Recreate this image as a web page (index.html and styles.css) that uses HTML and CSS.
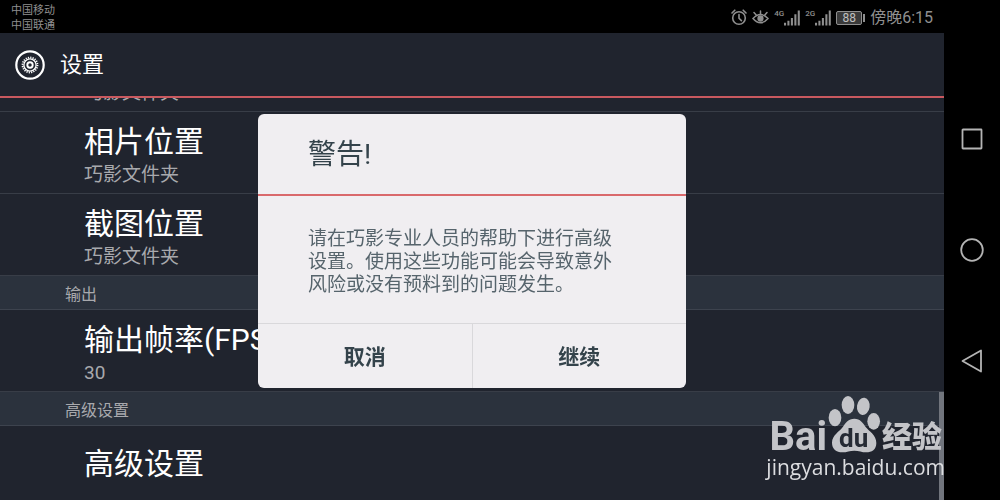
FILE: index.html
```html
<!DOCTYPE html>
<html lang="zh-CN">
<head>
  <meta charset="UTF-8">
  <meta name="viewport" content="width=device-width, initial-scale=1.0">
  <title>设置</title>
  <link rel="stylesheet" href="styles.css">
</head>
<body>
  <div class="screen">
    <div class="status-bar">
      <div class="carriers">
        <p>中国移动</p>
        <p>中国联通</p>
      </div>
      <div class="status-icons">
        <svg class="alarm" width="16" height="17" viewBox="0 0 16 17" fill="none" stroke="currentColor" stroke-width="1.6" stroke-linecap="round">
          <circle cx="8" cy="9" r="6.3"/>
          <path d="M8 5.5V9.2L10.4 11.6M1 4L3.8 1.2M15 4L12.2 1.2"/>
        </svg>
        <svg class="eye" width="17" height="17" viewBox="0 0 17 17" fill="none" stroke="currentColor" stroke-width="1.5" stroke-linecap="round">
          <path d="M1 9.5Q8.5 1.5 16 9.5Q8.5 18 1 9.5Z"/>
          <circle cx="8.5" cy="9.5" r="2.4" fill="currentColor"/>
          <path d="M8.5 5V2M4.2 6L2 3.5M12.8 6L15 3.5"/>
        </svg>
        <div class="signal">
          <span>4G</span>
          <svg width="16" height="16" viewBox="0 0 17 16" fill="currentColor">
            <path d="M0 13h2.2v3h-2.2zM3.6 11h2.2v5h-2.2zM7.3 8h2.2v8h-2.2zM11 4h2.2v12h-2.2zM14.6 0h2.2v16h-2.2z"/>
          </svg>
        </div>
        <div class="signal">
          <span>2G</span>
          <svg width="16" height="16" viewBox="0 0 17 16" fill="currentColor">
            <path d="M0 13h2.2v3h-2.2zM3.6 11h2.2v5h-2.2zM7.3 8h2.2v8h-2.2zM11 4h2.2v12h-2.2zM14.6 0h2.2v16h-2.2z"/>
          </svg>
        </div>
        <div class="battery"><span>88</span></div>
        <time>傍晚6:15</time>
      </div>
    </div>

    <main class="app">
      <header class="app-header">
        <svg width="32" height="32" viewBox="0 0 32 32" fill="none" stroke="#fff">
          <circle cx="16" cy="16" r="13.7" stroke-width="2.2"/>
          <circle cx="16" cy="16" r="7.5" stroke-width="1.8" stroke-dasharray="1.2 1.156"/>
          <circle cx="16" cy="16" r="6.1" stroke-width="1.3"/>
          <circle cx="16" cy="16" r="2.7" stroke-width="1.9"/>
        </svg>
        <h1>设置</h1>
      </header>

      <div class="settings">
        <ul class="settings-list">
          <li class="item">
            <p>巧影文件夹</p>
          </li>
          <li class="item">
            <h2>相片位置</h2>
            <p>巧影文件夹</p>
          </li>
          <li class="item">
            <h2>截图位置</h2>
            <p>巧影文件夹</p>
          </li>
          <li class="section">输出</li>
          <li class="item">
            <h2>输出帧率(FPS)</h2>
            <p>30</p>
          </li>
          <li class="section">高级设置</li>
          <li class="item item-single">
            <h2>高级设置</h2>
          </li>
        </ul>
        <div class="scrollbar"></div>
      </div>
    </main>

    <nav class="nav-bar">
      <button type="button" aria-label="最近任务">
        <svg width="24" height="24" viewBox="0 0 24 24"><rect x="2.5" y="2.5" width="19" height="19" rx="0.5"/></svg>
      </button>
      <button type="button" aria-label="主屏幕">
        <svg width="24" height="24" viewBox="0 0 24 24"><circle cx="12" cy="12" r="10.8"/></svg>
      </button>
      <button type="button" aria-label="返回">
        <svg width="24" height="24" viewBox="0 0 24 24"><path d="M2.5 12L21 1.5V22.5Z"/></svg>
      </button>
    </nav>
  </div>

  <div class="overlay">
    <div class="dialog" role="alertdialog" aria-labelledby="dialog-title" aria-describedby="dialog-text">
      <h2 class="dialog-title" id="dialog-title">警告!</h2>
      <p class="dialog-text" id="dialog-text">请在巧影专业人员的帮助下进行高级设置。使用这些功能可能会导致意外风险或没有预料到的问题发生。</p>
      <div class="dialog-buttons">
        <button type="button">取消</button>
        <button type="button">继续</button>
      </div>
    </div>
  </div>

  <div class="watermark">
    <div class="watermark-logo">
      <span class="bai">Bai</span>
      <svg width="53" height="58" viewBox="265 38 159 174">
        <ellipse cx="286" cy="106" rx="19" ry="26"/>
        <ellipse cx="325" cy="68" rx="19" ry="27"/>
        <ellipse cx="371" cy="72" rx="19" ry="26" transform="rotate(8 371 72)"/>
        <ellipse cx="402" cy="117" rx="19" ry="25"/>
        <path d="M344 109C362 109 370 122 378 134C388 147 410 158 410 182C410 202 396 210 380 210C366 210 358 205 344 205C330 205 322 210 308 210C290 210 277 200 277 181C277 158 300 147 310 133C318 121 326 109 344 109Z"/>
        <text x="342" y="193" text-anchor="middle">du</text>
      </svg>
      <span class="jingyan">经验</span>
    </div>
    <p class="watermark-url">jingyan.baidu.com</p>
  </div>
</body>
</html>
```
FILE: styles.css
```css
* {
  margin: 0;
  padding: 0;
  box-sizing: border-box;
  font-family: Roboto, 'Noto Sans CJK SC', sans-serif;
}

body {
  background-color: #000;
  overflow: hidden;
}

svg {
  display: block;
  flex-shrink: 0;
}

.screen {
  display: grid;
  grid-template-columns: 1fr 56px;
  grid-template-rows: auto 1fr;
  height: 100vh;
}

/* Status bar */
.status-bar {
  display: flex;
  justify-content: space-between;
  align-items: center;
  height: 33px;
  padding: 2px 11px 0;
  color: #8f8f8f;
}

.carriers {
  font-size: 11px;
  line-height: 15px;
}

.status-icons {
  display: flex;
  align-items: center;
  gap: 5px;
}

.signal {
  display: flex;
  align-items: flex-start;
}

.signal span {
  font-size: 8px;
  line-height: 8px;
  font-weight: 500;
}

.battery {
  display: flex;
  align-items: center;
}

.battery span {
  width: 26px;
  height: 14px;
  border: 1px solid #8f8f8f;
  border-radius: 2px;
  background-color: #3a3a3a;
  color: #c0c0c0;
  font-size: 12px;
  line-height: 12px;
  text-align: center;
}

.battery::after {
  content: '';
  width: 2px;
  height: 8px;
  margin-left: 1px;
  background-color: #8f8f8f;
}

.status-icons time {
  font-size: 16px;
  line-height: 24px;
}

/* Settings */
.app {
  grid-row: 2;
  display: flex;
  flex-direction: column;
  min-height: 0;
  background-color: #20242e;
  color: #fff;
}

.app-header {
  display: flex;
  align-items: center;
  gap: 14px;
  height: 65px;
  padding-left: 14px;
  border-bottom: 2px solid #c9595f;
}

.app-header h1 {
  font-size: 22px;
  line-height: 30px;
  font-weight: 400;
}

.settings {
  position: relative;
  flex: 1;
  min-height: 0;
  overflow: hidden;
}

/* the list is scrolled down, the first item is only partly visible */
.settings-list {
  margin-top: -68px;
  list-style: none;
}

.item {
  display: flex;
  flex-direction: column;
  justify-content: flex-end;
  height: 82px;
  padding: 0 0 4px 84px;
  border-bottom: 1px solid #383d47;
}

.item-single {
  height: 76px;
  justify-content: center;
  padding-bottom: 0;
}

.item h2 {
  font-size: 30px;
  line-height: 38px;
  font-weight: 400;
}

.item p {
  font-size: 19px;
  line-height: 28px;
  color: #a8a9ad;
}

.section {
  height: 34px;
  padding-left: 65px;
  border-bottom: 1px solid #3d434e;
  background-color: #2b323d;
  color: #a8a9ad;
  font-size: 16px;
  line-height: 37px;
}

.scrollbar {
  position: absolute;
  right: 0;
  bottom: 0;
  width: 5px;
  height: 108px;
  background-color: #71757d;
}

/* Navigation keys */
.nav-bar {
  grid-column: 2;
  grid-row: 1 / 3;
  display: flex;
  flex-direction: column;
  align-items: center;
  justify-content: center;
  gap: 87px;
}

.nav-bar button {
  background: none;
  border: none;
  cursor: pointer;
}

.nav-bar svg {
  fill: none;
  stroke: #b4b4b4;
  stroke-width: 1.8;
  stroke-linejoin: round;
}

/* Warning dialog */
.overlay {
  position: fixed;
  inset: 2px 56px 0 0;
  display: flex;
  align-items: center;
  justify-content: center;
}

.dialog {
  width: 428px;
  max-width: 90%;
  border-radius: 6px;
  background-color: #f0eef1;
  color: #34434b;
  overflow: hidden;
}

.dialog-title {
  padding: 21px 50px 19px;
  border-bottom: 2px solid #d9696c;
  font-size: 28px;
  line-height: 40px;
  font-weight: 400;
}

.dialog-text {
  padding: 31px 60px 27px 50px;
  color: #56646c;
  font-size: 19px;
  line-height: 23px;
}

.dialog-buttons {
  display: flex;
  border-top: 1px solid #d9d8db;
}

.dialog-buttons button {
  flex: 1;
  padding: 18px 0 16px;
  background: none;
  border: none;
  color: #34434b;
  cursor: pointer;
  font-size: 21px;
  line-height: 30px;
  font-weight: 700;
}

.dialog-buttons button + button {
  border-left: 1px solid #d9d8db;
}

/* Watermark */
.watermark {
  position: fixed;
  right: 55px;
  bottom: 19px;
  color: #c3c4c8;
}

.watermark-logo {
  display: flex;
  align-items: flex-end;
  justify-content: flex-end;
  gap: 1px;
  padding-right: 3px;
}

.watermark-logo svg {
  fill: #c3c4c8;
}

.watermark-logo text {
  fill: #252a34;
  font-size: 78px;
  font-weight: 700;
}

.bai {
  font-size: 40px;
  line-height: 32px;
  font-weight: 700;
}

.jingyan {
  font-size: 30px;
  line-height: 32px;
  font-weight: 900;
}

.watermark-url {
  font-family: 'Open Sans', sans-serif;
  font-size: 21px;
  line-height: 28px;
  color: #dcdde0;
}
```
